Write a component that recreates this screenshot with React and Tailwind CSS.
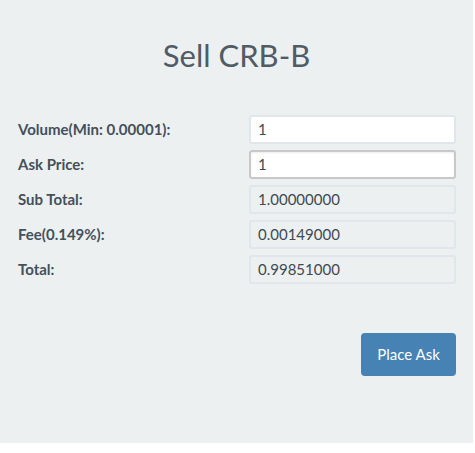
export default function App() {
  const rows = [
    { label: "Volume(Min: 0.00001):", value: "1", kind: "input" },
    { label: "Ask Price:", value: "1", kind: "focus" },
    { label: "Sub Total:", value: "1.00000000", kind: "readonly" },
    { label: "Fee(0.149%):", value: "0.00149000", kind: "readonly" },
    { label: "Total:", value: "0.99851000", kind: "readonly" },
  ];

  return (
    <div className="w-[475px] h-[453px] bg-white" style={{ fontFamily: "Lato, 'Open Sans', sans-serif" }}>
      <div className="w-[473px] h-[443px] bg-[#ecf0f1] text-[#4b5964] flex flex-col">
        <h1 className="pt-[35px] text-center text-[31px] leading-[40px] text-[#505b63]">Sell CRB-B</h1>

        {/* Form */}
        <div className="mt-[40px] flex flex-col gap-[6px] pl-[18px] pr-[17px]">
          {rows.map((row, i) => (
            <div key={i} className="flex items-center">
              <label className="w-[231px] text-[15px] font-bold text-[#44505a]">{row.label}</label>
              <div
                className={
                  row.kind === "readonly"
                    ? "flex-1 h-[29px] px-[7px] flex items-center rounded-[3px] border-2 border-[#dfe6ec] bg-[#ecf0f1] text-[15px] text-[#3f4a52]"
                    : row.kind === "focus"
                    ? "flex-1 h-[29px] px-[7px] flex items-center rounded-[3px] border-2 border-[#c8c8c8] bg-white text-[15px] text-[#3f4a52] shadow-[inset_0_1px_2px_rgba(0,0,0,0.08)]"
                    : "flex-1 h-[29px] px-[7px] flex items-center rounded-[3px] border-2 border-[#dfe6ec] bg-white text-[15px] text-[#3f4a52]"
                }
              >
                {row.value}
              </div>
            </div>
          ))}
        </div>

        <div className="mt-[49px] flex justify-end pr-[17px]">
          <button className="w-[95px] h-[43px] rounded-[4px] bg-[#4682b4] text-white text-[15px]">Place Ask</button>
        </div>
      </div>
    </div>
  );
}
